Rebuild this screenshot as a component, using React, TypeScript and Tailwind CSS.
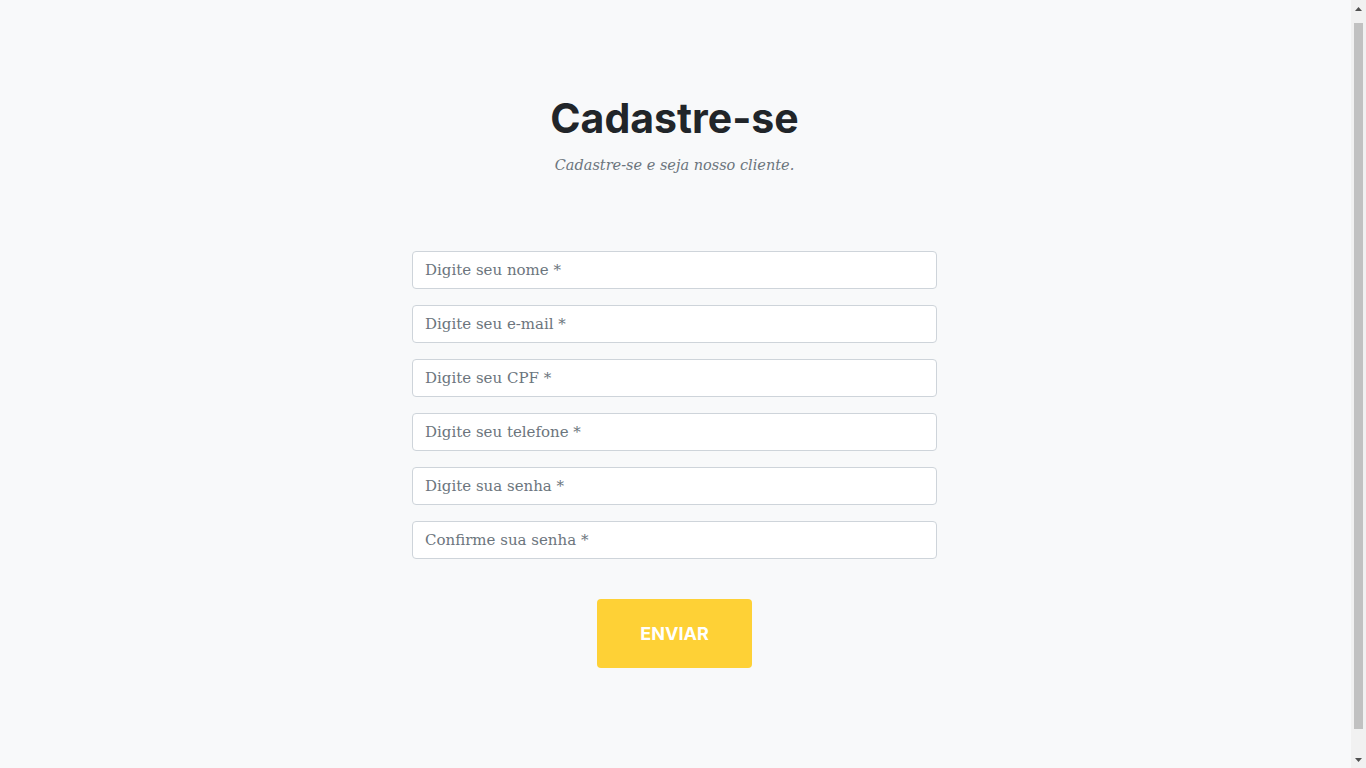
import React from 'react';

const fields = [
  { id: 'nome', type: 'text', placeholder: 'Digite seu nome *' },
  { id: 'email', type: 'email', placeholder: 'Digite seu e-mail *' },
  { id: 'cpf', type: 'text', placeholder: 'Digite seu CPF *' },
  { id: 'telefone', type: 'tel', placeholder: 'Digite seu telefone *' },
  { id: 'senha', type: 'password', placeholder: 'Digite sua senha *' },
  { id: 'confirma', type: 'password', placeholder: 'Confirme sua senha *' },
];

// the page in the shot shows the browser's classic scrollbar, drawn here as a side strip
const ScrollStrip = () => (
  <div className="flex h-screen w-[15px] shrink-0 flex-col items-center bg-[#f1f1f1]">
    <div className="flex h-[17px] w-full items-center justify-center">
      <svg width="7" height="4" viewBox="0 0 7 4">
        <path d="M3.5 0 L7 4 L0 4 Z" fill="#505050" />
      </svg>
    </div>
    <div className="mt-[6px] mb-[22px] w-[9px] flex-1 bg-[#c1c1c1]" />
    <div className="flex h-[17px] w-full items-center justify-center">
      <svg width="7" height="4" viewBox="0 0 7 4">
        <path d="M0 0 L7 0 L3.5 4 Z" fill="#505050" />
      </svg>
    </div>
  </div>
);

export default function App() {
  return (
    <div className="flex h-screen w-full overflow-hidden bg-[#f8f9fa]">
      <section className="flex-1 pt-[94px] pr-[2px]">
        <div className="mx-auto flex flex-col items-center text-center">
          <h2 className="font-['Inter',sans-serif] text-[41px] leading-[48px] font-bold text-[#212529]">
            Cadastre-se
          </h2>
          <h3 className="mt-[11px] font-['DejaVu_Serif',serif] text-[14.5px] leading-6 italic text-[#6c757d]">
            Cadastre-se e seja nosso cliente.
          </h3>
        </div>

        <form
          className="mx-auto mt-[74px] flex w-[525px] flex-col items-center"
          onSubmit={(e) => e.preventDefault()}
        >
          <div className="flex w-full flex-col gap-4">
            {fields.map((f) => (
              <input
                key={f.id}
                id={f.id}
                type={f.type}
                placeholder={f.placeholder}
                className="h-[38px] w-full rounded border border-[#ced4da] bg-white px-3 font-['DejaVu_Serif',serif] text-[15px] text-[#495057] placeholder:text-[#6c757d] outline-none"
              />
            ))}
          </div>
          <button
            type="submit"
            className="mt-10 h-[69px] w-[155px] rounded bg-[#fed136] font-['Inter',sans-serif] text-lg font-bold uppercase text-white"
          >
            Enviar
          </button>
        </form>
      </section>
      <ScrollStrip />
    </div>
  );
}
